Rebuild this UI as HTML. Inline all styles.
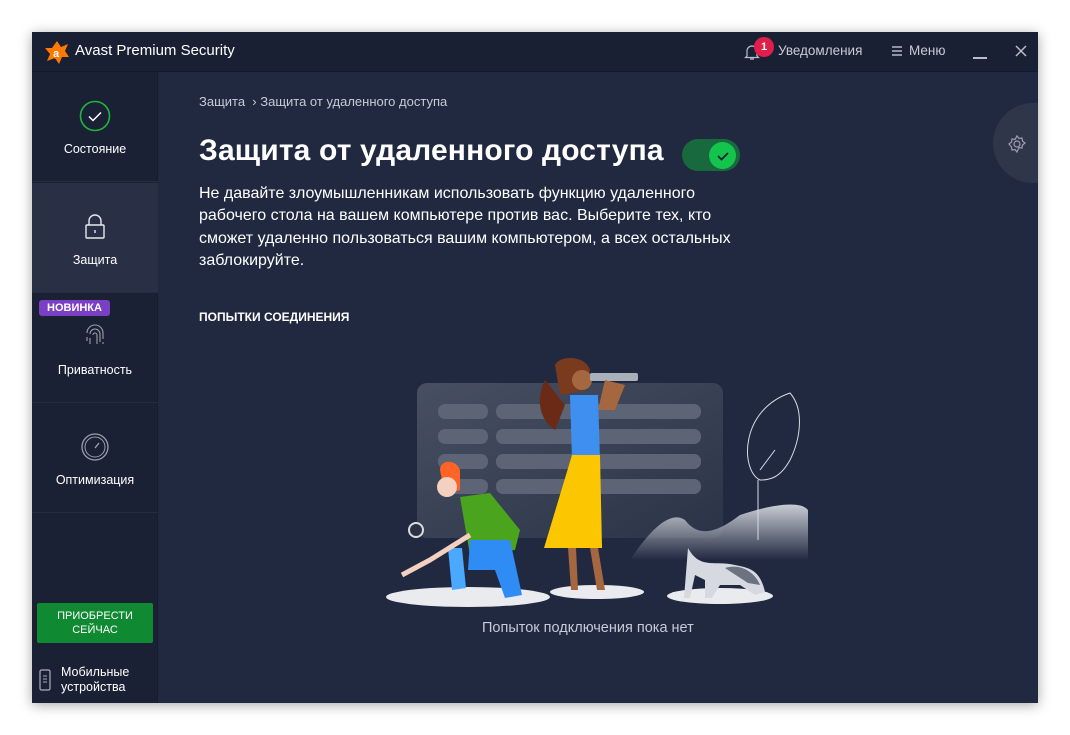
<!DOCTYPE html>
<html><head><meta charset="utf-8"><style>
*{margin:0;padding:0;box-sizing:border-box}
body{width:1070px;height:735px;background:#fff;font-family:"Liberation Sans",sans-serif;position:relative;overflow:hidden}
.win{position:absolute;left:32px;top:32px;width:1006px;height:671px;background:#212941;box-shadow:0 2px 12px rgba(0,0,0,.35);overflow:hidden}
.tb{position:absolute;left:0;top:0;width:1006px;height:40px;background:#1a2033;border-bottom:1px solid #141a2a}
.tb .t{position:absolute;left:43px;top:10px;color:#fff;font-size:15px}
.side{position:absolute;left:0;top:40px;width:126px;height:631px;background:#1b2134;border-right:1px solid #171c2c}
.it{position:absolute;left:0;width:126px;height:110px;border-bottom:1px solid #252c40;color:#fff;font-size:12.5px;text-align:center}
.it span{position:absolute;left:0;right:0;top:70px}
.it svg{position:absolute;left:47px;top:28px}
</style></head><body>
<div class="win">
 <div class="tb">
  <svg style="position:absolute;left:12px;top:7px" width="26" height="26" viewBox="0 0 26 26"><path d="M13 2 L17 8 L24 5 L21 12 L25 18 L18 18 L15 25 L11 19 L3 22 L6 15 L1 9 L8 9Z" fill="#ff7800"/><circle cx="13" cy="14" r="6" fill="#ff7800"/><text x="9" y="18" font-size="11" font-weight="bold" fill="#fff" font-family="Liberation Sans">a</text></svg>
  <div class="t">Avast Premium Security</div>
  <svg style="position:absolute;left:712px;top:11px" width="16" height="18" viewBox="0 0 16 18"><path d="M3 13 V8 a5 5 0 0 1 10 0 V13 L14.5 14.5 H1.5Z M6 16 h4" stroke="#b9bfcc" stroke-width="1.2" fill="none"/></svg>
  <div style="position:absolute;left:722px;top:5px;width:20px;height:20px;border-radius:50%;background:#e01e4b;color:#fff;font-size:11px;font-weight:bold;text-align:center;line-height:20px">1</div>
  <div style="position:absolute;left:746px;top:11px;color:#c6cbd6;font-size:13.5px">Уведомления</div>
  <div style="position:absolute;left:860px;top:14px;width:10px;height:10px;border-top:2px solid #8d93a3;border-bottom:2px solid #8d93a3"><div style="margin-top:2px;height:2px;background:#8d93a3"></div></div>
  <div style="position:absolute;left:877px;top:11px;color:#c6cbd6;font-size:13.5px">Меню</div>
  <div style="position:absolute;left:941px;top:25px;width:14px;height:1.5px;background:#b9bfcc"></div>
  <svg style="position:absolute;left:983px;top:13px" width="12" height="12"><path d="M1 1L11 11M11 1L1 11" stroke="#b9bfcc" stroke-width="1.5"/></svg>
 </div>
 <div class="side">
  <div class="it" style="top:0"><svg width="32" height="32"><circle cx="16" cy="16" r="14.5" stroke="#1fb53d" stroke-width="1.6" fill="none"/><path d="M10 16.5l4 4 8-8" stroke="#fff" stroke-width="1.5" fill="none"/></svg><span>Состояние</span></div>
  <div class="it" style="top:111px;background:#293046"><svg width="32" height="32"><rect x="7" y="14" width="18" height="13" rx="1" stroke="#e8eaef" stroke-width="1.4" fill="none"/><path d="M10 14 v-4 a6 6 0 0 1 12 0 v4" stroke="#e8eaef" stroke-width="1.4" fill="none"/><path d="M16 19v3" stroke="#e8eaef" stroke-width="1.4"/></svg><span>Защита</span></div>
  <div class="it" style="top:221px"><svg width="32" height="32"><g stroke="#9aa0ad" stroke-width="1.1" fill="none"><path d="M8 12a8 8 0 0 1 16 0v6"/><path d="M11 13a5 5 0 0 1 10 0v8"/><path d="M14 14a2 2 0 0 1 4 0v9"/><path d="M8 16v4M11 17v6M24 21v2"/></g></svg><span>Приватность</span></div>
  <div style="position:absolute;left:7px;top:228px;width:71px;height:16px;border-radius:3px;background:#7b3fc4;color:#fff;font-size:11px;font-weight:bold;text-align:center;line-height:16px">НОВИНКА</div>
  <div class="it" style="top:331px"><svg width="32" height="32"><circle cx="16" cy="16" r="13" stroke="#9aa0ad" stroke-width="1.3" fill="none"/><circle cx="16" cy="16" r="10" stroke="#9aa0ad" stroke-width="1" fill="none"/><path d="M16 17l4-5" stroke="#9aa0ad" stroke-width="1.4"/></svg><span>Оптимизация</span></div>
  <div style="position:absolute;left:5px;top:531px;width:116px;height:40px;background:#0f8a33;border-radius:2px;color:#fff;font-size:11px;text-align:center;line-height:14px;padding-top:6px">ПРИОБРЕСТИ<br>СЕЙЧАС</div>
  <svg style="position:absolute;left:7px;top:597px" width="12" height="22"><rect x="1" y="1" width="10" height="20" rx="1.5" stroke="#a8aebb" stroke-width="1.2" fill="none"/><path d="M4 7h4M4 10h4M4 13h4" stroke="#a8aebb"/></svg>
  <div style="position:absolute;left:29px;top:593px;color:#fff;font-size:12.5px;line-height:14.5px">Мобильные<br>устройства</div>
 </div>
 <div style="position:absolute;left:961px;top:71px;width:90px;height:80px;border-radius:40px;background:#2f3649"></div>
 <svg style="position:absolute;left:975px;top:102px" width="20" height="20" viewBox="0 0 20 20"><path d="M10 2l2 2.5 3-.5.5 3 2.5 2-2.5 2-.5 3-3-.5L10 18l-2-2.5-3 .5-.5-3L2 10l2.5-2 .5-3 3 .5Z" stroke="#9aa0ad" stroke-width="1.2" fill="none"/><circle cx="10" cy="10" r="3" stroke="#9aa0ad" stroke-width="1.2" fill="none"/></svg>
 <div style="position:absolute;left:167px;top:62px;color:#c6cbd6;font-size:13px">Защита &nbsp;›&nbsp;Защита от удаленного доступа</div>
 <div style="position:absolute;left:167px;top:102px;color:#fff;font-size:30px;font-weight:bold;letter-spacing:0.15px;white-space:nowrap">Защита от удаленного доступа</div>
 <div style="position:absolute;left:650px;top:107px;width:58px;height:32px;border-radius:16px;background:#18693e"></div>
 <div style="position:absolute;left:677px;top:110px;width:27px;height:27px;border-radius:50%;background:#13c54d"></div>
 <svg style="position:absolute;left:684px;top:117px" width="14" height="14"><path d="M2 7l3.5 3.5L12 4" stroke="#1a2033" stroke-width="1.8" fill="none"/></svg>
 <div style="position:absolute;left:167px;top:151px;width:540px;color:#fff;font-size:16px;line-height:22.3px">Не давайте злоумышленникам использовать функцию удаленного рабочего стола на вашем компьютере против вас. Выберите тех, кто сможет удаленно пользоваться вашим компьютером, а всех остальных заблокируйте.</div>
 <div style="position:absolute;left:167px;top:278px;color:#fff;font-size:12px;font-weight:bold">ПОПЫТКИ СОЕДИНЕНИЯ</div>
 <svg style="position:absolute;left:348px;top:318px" width="440" height="270" viewBox="380 350 440 270">
  <defs>
   <linearGradient id="pn" x1="0" y1="0" x2="1" y2="1"><stop offset="0" stop-color="#4b5365"/><stop offset="1" stop-color="#2c3448"/></linearGradient>
   <linearGradient id="hl" x1="0" y1="0" x2="0" y2="1"><stop offset="0" stop-color="#c8ccd3"/><stop offset="1" stop-color="#c8ccd3" stop-opacity="0"/></linearGradient>
  </defs>
  <rect x="417" y="383" width="306" height="155" rx="10" fill="url(#pn)" opacity=".9"/>
  <g fill="#5c6476">
   <rect x="438" y="404" width="50" height="15" rx="7"/><rect x="496" y="404" width="205" height="15" rx="7"/>
   <rect x="438" y="429" width="50" height="15" rx="7"/><rect x="496" y="429" width="205" height="15" rx="7"/>
   <rect x="438" y="454" width="50" height="15" rx="7"/><rect x="496" y="454" width="205" height="15" rx="7"/>
   <rect x="438" y="479" width="50" height="15" rx="7"/><rect x="496" y="479" width="205" height="15" rx="7"/>
  </g>
  <path d="M630 560 C650 530 670 510 685 520 C700 540 720 530 740 515 C770 505 800 500 808 510 L808 560Z" fill="url(#hl)"/>
  <path d="M758 540 V480 M760 480 C740 470 740 410 790 393 C805 410 800 440 790 460 C780 478 770 480 760 480 M760 470 L775 450" stroke="#d8dbe0" stroke-width="1" fill="none"/>
  <ellipse cx="468" cy="597" rx="82" ry="10" fill="#e9ebee"/>
  <ellipse cx="597" cy="592" rx="47" ry="7" fill="#e9ebee"/>
  <ellipse cx="720" cy="596" rx="53" ry="8" fill="#e9ebee"/>
  <path d="M688 548 C700 570 715 560 735 565 C750 568 760 570 765 592 L755 595 L740 585 L720 585 L712 598 L705 598 L705 580 L695 575 L690 598 L684 598 Z" fill="#d6dae0"/>
  <path d="M725 568 C740 563 755 572 760 585 L748 583Z" fill="#6b7280"/>
  <path d="M545 380 C535 400 540 420 555 430 L565 405 Z" fill="#6b2a16"/>
  <path d="M555 365 C560 355 585 355 590 370 L585 390 L560 395Z" fill="#7a3a1e"/>
  <circle cx="582" cy="380" r="10" fill="#a5673f"/>
  <rect x="590" y="373" width="48" height="8" rx="2" fill="#a8b0ba"/>
  <path d="M605 380 L625 385 L615 410 L598 410Z" fill="#a5673f"/>
  <path d="M570 395 L598 395 L600 460 L572 460Z" fill="#3f8ff0"/>
  <path d="M572 455 L600 455 L602 548 L544 548 Z" fill="#fcc700"/>
  <path d="M568 548 L576 548 L578 590 L571 590Z M590 548 L598 548 L605 590 L597 590Z" fill="#a5673f"/>
  <path d="M440 470 C440 460 455 458 460 470 L460 490 L445 495Z" fill="#ff6326"/>
  <circle cx="447" cy="487" r="10" fill="#f3d0c0"/>
  <path d="M460 497 L490 493 L520 530 L515 550 L470 555Z" fill="#4aa41d"/>
  <path d="M470 540 L510 540 L522 595 L505 598 L495 570 L468 570Z" fill="#2f8cf4"/>
  <path d="M448 548 L462 548 L466 588 L452 590Z" fill="#4aa8ff"/>
  <path d="M470 535 L430 560 L402 575" stroke="#f3d0c0" stroke-width="5" fill="none"/>
  <circle cx="416" cy="530" r="7" stroke="#ddd" stroke-width="2" fill="#2a3246"/>
 </svg>
 <div style="position:absolute;left:450px;top:588px;color:#c6cbd6;font-size:14.5px">Попыток подключения пока нет</div>
</div>
</body></html>
